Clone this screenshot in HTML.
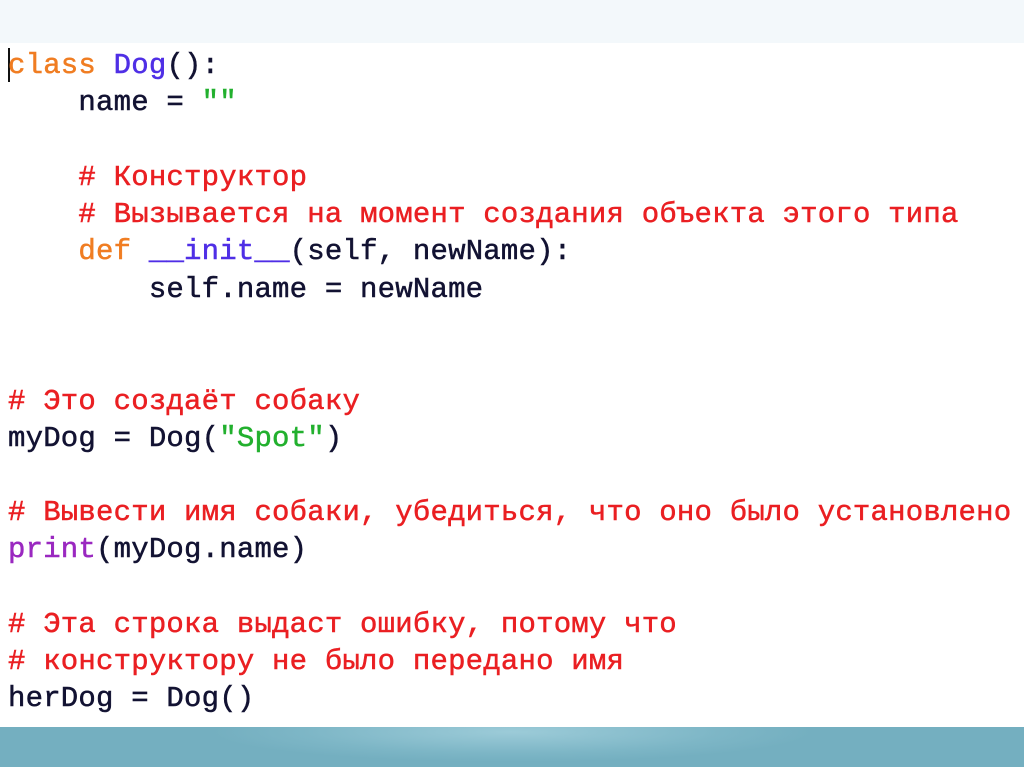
<!DOCTYPE html>
<html><head><meta charset="utf-8"><style>
html,body{margin:0;padding:0;width:1024px;height:767px;overflow:hidden;background:#fff;}
.top{position:absolute;left:0;top:0;width:1024px;height:43px;background:#f3f8fb;}
.bot{position:absolute;left:0;top:727px;width:1024px;height:40px;background:radial-gradient(ellipse 300px 30px at 512px 5px,#9ccbd8,#7db6c6 70%,#74afc0);}
.l{position:absolute;left:8px;margin:0;font-family:"Liberation Mono","DejaVu Sans Mono",monospace;font-size:29px;letter-spacing:0.2px;line-height:37px;color:#121232;white-space:pre;-webkit-text-stroke:0.5px currentColor;}
.k{color:#f07d22}.b{color:#4f2fe6}.c{color:#ea1f22}.s{color:#22b02e}.p{color:#9a28c0}
.cur{position:absolute;left:8px;top:48px;width:2px;height:34px;background:#111;}
</style></head><body>
<div class="top"></div>
<div class="cur"></div>
<div class="l" style="top:47px"><span class="k">class</span> <span class="b">Dog</span>():</div>
<div class="l" style="top:84px">    name = <span class="s">""</span></div>
<div class="l" style="top:159px">    <span class="c"># Конструктор</span></div>
<div class="l" style="top:196px">    <span class="c"># Вызывается на момент создания объекта этого типа</span></div>
<div class="l" style="top:233px">    <span class="k">def</span> <span class="b">__init__</span>(self, newName):</div>
<div class="l" style="top:271px">        self.name = newName</div>
<div class="l" style="top:383px"><span class="c"># Это создаёт собаку</span></div>
<div class="l" style="top:420px">myDog = Dog(<span class="s">"Spot"</span>)</div>
<div class="l" style="top:494px"><span class="c"># Вывести имя собаки, убедиться, что оно было установлено</span></div>
<div class="l" style="top:531px"><span class="p">print</span>(myDog.name)</div>
<div class="l" style="top:606px"><span class="c"># Эта строка выдаст ошибку, потому что</span></div>
<div class="l" style="top:643px"><span class="c"># конструктору не было передано имя</span></div>
<div class="l" style="top:680px">herDog = Dog()</div>
<div class="bot"></div>
</body></html>
